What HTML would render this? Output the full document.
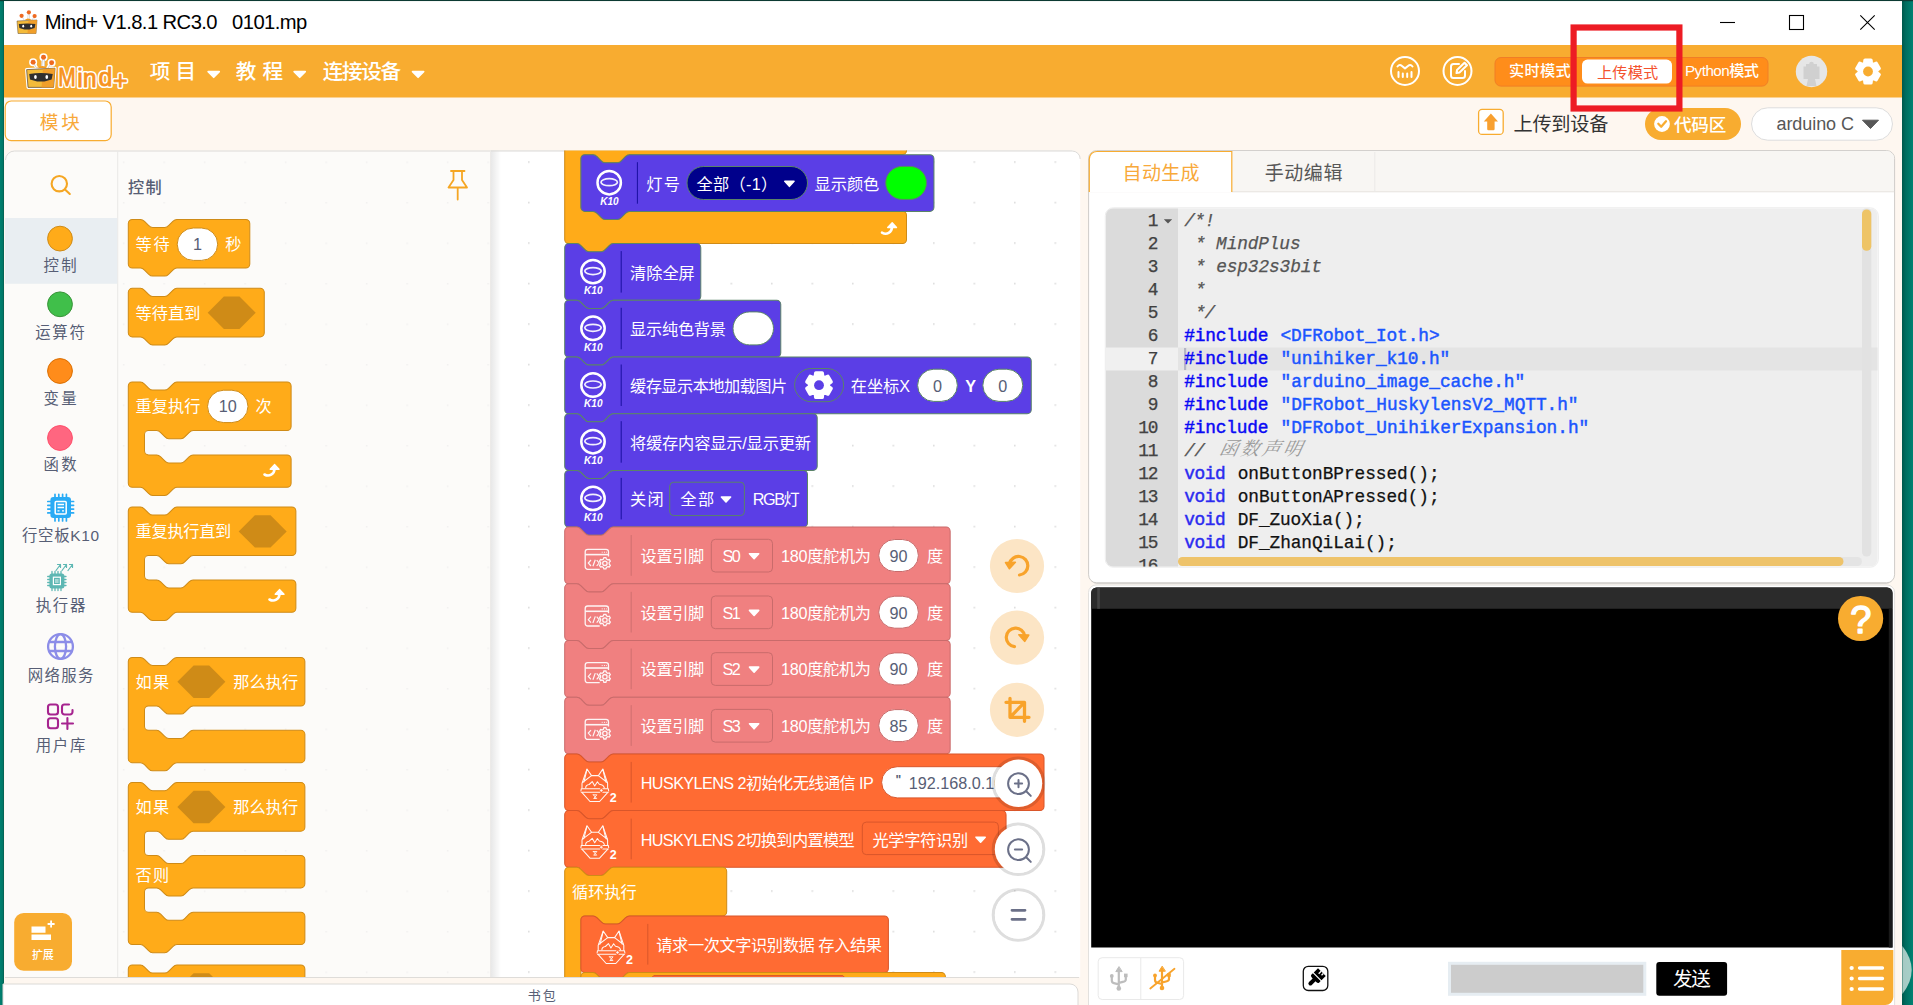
<!DOCTYPE html>
<html lang="zh-CN"><head><meta charset="utf-8"><title>Mind+ V1.8.1 RC3.0 0101.mp</title>
<style>html,body{margin:0;padding:0;background:#FEF7F0;}body{width:1913px;height:1005px;position:relative;overflow:hidden;font-family:'Liberation Sans','Noto Sans CJK SC',sans-serif}svg text{white-space:pre}</style></head>
<body>
<svg width="1913" height="1005" viewBox="0 0 1913 1005" font-family='"Liberation Sans","Noto Sans CJK SC",sans-serif' style="position:absolute;left:0;top:0">
<defs>
<linearGradient id="gR" x1="0" x2="1"><stop offset="0" stop-color="#00584c"/><stop offset="0.35" stop-color="#006e60"/><stop offset="1" stop-color="#008272"/></linearGradient>
<linearGradient id="gL" x1="0" x2="1"><stop offset="0" stop-color="#008070"/><stop offset="0.8" stop-color="#007565"/><stop offset="1" stop-color="#0a4a40"/></linearGradient>
<linearGradient id="shF" x1="0" x2="1"><stop offset="0" stop-color="#000" stop-opacity="0.09"/><stop offset="1" stop-color="#000" stop-opacity="0"/></linearGradient>
<clipPath id="cpWS"><path d="M491,150.5 H1072.2 a8,8 0 0 1 8,8 V977 H491 z"/></clipPath>
<clipPath id="cpFly"><rect x="118" y="151.5" width="373" height="825.5"/></clipPath>
<clipPath id="cpEd"><rect x="1106" y="208.5" width="771.5" height="358" rx="7"/></clipPath>
<pattern id="dots" x="528" y="161.25" width="40.5" height="40.5" patternUnits="userSpaceOnUse"><rect x="0" y="0" width="1.6" height="1.6" fill="#dcdcdc"/></pattern>
<pattern id="dotsF" x="122.9" y="161.5" width="40.5" height="40.5" patternUnits="userSpaceOnUse"><rect x="0" y="0" width="1.5" height="1.5" fill="#f1f0ef"/></pattern>
</defs>
<rect x="0" y="0" width="1913" height="1005" fill="#FEF7F0"/>
<rect x="0" y="0" width="4" height="1005" fill="url(#gL)"/>
<rect x="1902" y="0" width="11" height="1005" fill="url(#gR)"/>
<rect x="0" y="0" width="1913" height="1.2" fill="#0c3a33"/>
<rect x="4" y="1.2" width="1898" height="44" fill="#fff"/>
<g transform="translate(16,9.5) scale(1.0)">
<path d="M12.3,3 L11.6,10 M13.4,3 L13.6,10 M5.8,6.5 L8,10.5 M18.4,7 L16,10.5" stroke="#c9c9c9" stroke-width="0.6" fill="none"/>
<path d="M8.6,10.6 Q12.2,7.2 15.6,10.6 z" fill="#f39a1e"/>
<path d="M1,11.5 L21,10.5 L20,24 L2,24 z" fill="#f4bb3a" stroke="#5a4630" stroke-width="0.5" stroke-linejoin="round"/>
<path d="M12.5,11 L21,10.5 L20,24 L11.5,24 z" fill="#f09a28" opacity="0.85"/>
<path d="M2.8,14.6 Q11,13.2 19.4,14.6 L18.6,18.4 L13.5,19.9 H8.4 L3.4,18.4 z" fill="#2f2f2f"/>
<ellipse cx="7.2" cy="16.7" rx="0.95" ry="1.35" fill="#fff"/><ellipse cx="15.2" cy="16.7" rx="0.95" ry="1.35" fill="#fff"/>
<g fill="#ee6a21"><circle cx="5.6" cy="6.3" r="2.1"/><circle cx="12.9" cy="2.8" r="2.1"/><circle cx="18.6" cy="6.6" r="2.1"/></g>
</g>
<text x="44.80" y="29.40" font-size="20.2" fill="#000" textLength="262.50" lengthAdjust="spacing" xml:space="preserve">Mind+ V1.8.1 RC3.0   0101.mp</text>
<g stroke="#000" stroke-width="1.1" fill="none"><path d="M1720,22.5 H1735"/><rect x="1789.5" y="15.5" width="14" height="14"/><path d="M1860.3,15.3 L1874.7,29.7 M1874.7,15.3 L1860.3,29.7"/></g>
<rect x="4" y="45" width="1898" height="52.5" fill="#F8AC30"/>
<g transform="translate(25.2,53.3) scale(1.42)">
<g stroke="#fff" stroke-width="2.2" stroke-linejoin="round" fill="#fff"><path d="M1,11.5 L21,10.5 L20,24 L2,24 z"/><circle cx="5.6" cy="6.3" r="1.75"/><circle cx="12.9" cy="2.8" r="1.75"/><circle cx="18.6" cy="6.6" r="1.75"/><path d="M12.6,3 V10 M5.8,6.5 L8,10 M18,7 L16,10"/></g>
<path d="M12.3,3 L11.6,10 M13.4,3 L13.6,10 M5.8,6.5 L8,10.5 M18.4,7 L16,10.5" stroke="#c9c9c9" stroke-width="0.6" fill="none"/>
<path d="M8.6,10.6 Q12.2,7.2 15.6,10.6 z" fill="#f39a1e"/>
<path d="M1,11.5 L21,10.5 L20,24 L2,24 z" fill="#f4bb3a" stroke="#5a4630" stroke-width="0.5" stroke-linejoin="round"/>
<path d="M12.5,11 L21,10.5 L20,24 L11.5,24 z" fill="#f09a28" opacity="0.85"/>
<path d="M2.8,14.6 Q11,13.2 19.4,14.6 L18.6,18.4 L13.5,19.9 H8.4 L3.4,18.4 z" fill="#2f2f2f"/>
<ellipse cx="7.2" cy="16.7" rx="0.95" ry="1.35" fill="#fff"/><ellipse cx="15.2" cy="16.7" rx="0.95" ry="1.35" fill="#fff"/>
<g fill="#ee6a21"><circle cx="5.6" cy="6.3" r="1.75"/><circle cx="12.9" cy="2.8" r="1.75"/><circle cx="18.6" cy="6.6" r="1.75"/></g>
</g>
<text transform="translate(58.3,86.2) scale(0.84,1)" x="0" y="0" font-size="25" fill="#fff" stroke="#fff" stroke-width="3.9" stroke-linejoin="round">M</text>
<text transform="translate(77.3,86.8) scale(1,1)" x="0" y="0" font-size="25" fill="#fff" stroke="#fff" stroke-width="3.9" stroke-linejoin="round">i</text>
<text transform="translate(82.8,87.4) scale(1,1)" x="0" y="0" font-size="25" fill="#fff" stroke="#fff" stroke-width="3.9" stroke-linejoin="round">n</text>
<text transform="translate(98.6,86.4) scale(1,1)" x="0" y="0" font-size="25" fill="#fff" stroke="#fff" stroke-width="3.9" stroke-linejoin="round">d</text>
<text transform="translate(113.0,88.6) scale(1,1)" x="0" y="0" font-size="25" fill="#fff" stroke="#fff" stroke-width="3.9" stroke-linejoin="round">+</text>
<text transform="translate(58.3,86.2) scale(0.84,1)" x="0" y="0" font-size="25" fill="#F7931E" stroke="#F7931E" stroke-width="0.8" stroke-linejoin="round">M</text>
<text transform="translate(77.3,86.8) scale(1,1)" x="0" y="0" font-size="25" fill="#F7931E" stroke="#F7931E" stroke-width="0.8" stroke-linejoin="round">i</text>
<text transform="translate(82.8,87.4) scale(1,1)" x="0" y="0" font-size="25" fill="#F7931E" stroke="#F7931E" stroke-width="0.8" stroke-linejoin="round">n</text>
<text transform="translate(98.6,86.4) scale(1,1)" x="0" y="0" font-size="25" fill="#F7931E" stroke="#F7931E" stroke-width="0.8" stroke-linejoin="round">d</text>
<text transform="translate(113.0,88.6) scale(1,1)" x="0" y="0" font-size="25" fill="#F7931E" stroke="#F7931E" stroke-width="0.8" stroke-linejoin="round">+</text>
<text x="149.73" y="78.60" font-size="20.6" fill="#fff" font-weight="500" textLength="46.30" lengthAdjust="spacing">项 目</text>
<path d="M208.2,71.6 h11 l-5.5,5.6 z" fill="#fff" stroke="#fff" stroke-width="1.8" stroke-linejoin="round"/>
<text x="235.73" y="78.60" font-size="20.6" fill="#fff" font-weight="500" textLength="47.30" lengthAdjust="spacing">教 程</text>
<path d="M294.2,71.6 h11 l-5.5,5.6 z" fill="#fff" stroke="#fff" stroke-width="1.8" stroke-linejoin="round"/>
<text x="322.73" y="78.60" font-size="20.6" fill="#fff" font-weight="500" textLength="78.30" lengthAdjust="spacing">连接设备</text>
<path d="M412.6,71.6 h11 l-5.5,5.6 z" fill="#fff" stroke="#fff" stroke-width="1.8" stroke-linejoin="round"/>
<g fill="none" stroke="#fff" stroke-width="2"><circle cx="1405" cy="71" r="14"/><circle cx="1457.5" cy="71" r="14"/></g>
<g fill="none" stroke="#fff" stroke-width="2" stroke-linecap="round" stroke-linejoin="round"><path d="M1397.5,66.5 Q1399.5,64 1402,66 L1405,68.4 L1408,66 Q1410.5,64 1412.5,66.5"/><path d="M1398.5,72 V77 M1402.8,73.5 V77 M1407.2,73.5 V77 M1411.5,72 V77"/></g>
<g fill="none" stroke="#fff" stroke-width="2" stroke-linecap="round" stroke-linejoin="round"><path d="M1459,64 H1453.5 a2.5,2.5 0 0 0 -2.5,2.5 V75.500 a2.500,2.500 0 0 0 2.500,2.500 H1462.500 a2.500,2.500 0 0 0 2.500,-2.500 V71"/><path d="M1456.5,73 L1457,70 L1464.5,62.8 L1467,65.300 L1459.500,72.500 z"/></g>
<rect x="1495.00" y="57.50" width="273.00" height="28.60" rx="6" fill="#FF8D1A" stroke="#F07E26" stroke-width="1" />
<text x="1509.06" y="76.20" font-size="15.2" fill="#fff" font-weight="500" textLength="61.56" lengthAdjust="spacing">实时模式</text>
<rect x="1582.00" y="59.60" width="90.00" height="24.00" rx="5.5" fill="#fff" />
<text x="1597.06" y="78.20" font-size="15.2" fill="#F4522E" textLength="61.06" lengthAdjust="spacing">上传模式</text>
<text x="1685.00" y="75.50" font-size="15.2" fill="#fff" font-weight="500" textLength="74.00" lengthAdjust="spacing">Python模式</text>
<circle cx="1811.5" cy="71.5" r="15.7" fill="#e6e6e6"/>
<path d="M1803.5,66.5 h2.5 v-2.500 h3.200 a2.300,2.300 0 0 1 4.600,0 h3.200 v2.500 h2.500 v12.500 h-4.500 l1.500,7 h-10 l1.500,-7 h-4.500 z" fill="#d0d0d0"/>
<path d="M 1864.68,63.35 L 1865.00,60.30 L 1871.00,60.30 L 1871.32,63.35 L 1873.39,64.55 L 1876.20,63.30 L 1879.20,68.50 L 1876.72,70.31 L 1876.72,72.69 L 1879.20,74.50 L 1876.20,79.70 L 1873.39,78.45 L 1871.32,79.65 L 1871.00,82.70 L 1865.00,82.70 L 1864.68,79.65 L 1862.61,78.45 L 1859.80,79.70 L 1856.80,74.50 L 1859.28,72.69 L 1859.28,70.31 L 1856.80,68.50 L 1859.80,63.30 L 1862.61,64.55 z" fill="#fff" stroke="#fff" stroke-width="3.4" stroke-linejoin="round"/>
<circle cx="1868" cy="71.5" r="4.9" fill="#F8AC30"/>
<rect x="5.20" y="101.00" width="106.00" height="39.60" rx="6" fill="#fff" stroke="#F8AC30" stroke-width="1.2" />
<text x="39.85" y="129.20" font-size="18.6" fill="#F8A93A" textLength="40.03" lengthAdjust="spacing">模块</text>
<rect x="1478.60" y="109.40" width="24.60" height="25.00" rx="3.5" fill="#fff" stroke="#F8AC30" stroke-width="1.3" />
<path d="M1490.9,113.6 L1498,121.6 H1494.600 V129 a1.200,1.200 0 0 1 -1.200,1.200 H1488.400 a1.200,1.200 0 0 1 -1.200,-1.200 V121.600 H1483.800 z" fill="#F8A030"/>
<text x="1513.41" y="131.30" font-size="19.2" fill="#333" textLength="95.11" lengthAdjust="spacing">上传到设备</text>
<rect x="1645.00" y="108.00" width="96.00" height="32.00" rx="16.00" fill="#F8AC30"/>
<circle cx="1662" cy="124" r="7.9" fill="#fff"/><path d="M1658.300,123.800 L1661.200,126.700 L1666,121.300" fill="none" stroke="#F8AC30" stroke-width="2.300" stroke-linecap="round" stroke-linejoin="round"/>
<text x="1673.91" y="130.60" font-size="17.6" fill="#fff" font-weight="500" textLength="52.39" lengthAdjust="spacing">代码区</text>
<rect x="1751.50" y="107.80" width="141.00" height="32.40" rx="16.20" fill="#fff" stroke="#ddd" stroke-width="1"/>
<text x="1776.50" y="129.60" font-size="18" fill="#575757" textLength="77.50" lengthAdjust="spacing">arduino C</text>
<path d="M1862.5,120.200 h16 l-8,8.300 z" fill="#575757" stroke="#575757" stroke-width="1" stroke-linejoin="round"/>
<path d="M5,977 V158.500 a8,8 0 0 1 8,-8 H491 V977 z" fill="#FCFBF9"/>
<path d="M5.5,160 a9,9 0 0 1 9,-9 H1072" fill="none" stroke="#dcdad7" stroke-width="1"/>
<g clip-path="url(#cpWS)"><rect x="491" y="150" width="590" height="830" fill="#fff"/><rect x="491" y="150" width="590" height="830" fill="url(#dots)"/><rect x="491" y="150" width="10" height="830" fill="url(#shF)"/></g>
<path d="M491,151 H1072.200 a8,8 0 0 1 8,8" fill="none" stroke="#dcdad7" stroke-width="1"/>
<rect x="117.200" y="151.500" width="1" height="825.500" fill="#e9e8e6"/>
<rect x="490" y="151.500" width="1.200" height="825.500" fill="#eceae8"/>
<rect x="5" y="218" width="112.200" height="65.800" fill="#E9EEF2"/>
<g fill="none" stroke="#F5A623" stroke-width="2.100" stroke-linecap="round"><circle cx="59.300" cy="183.700" r="7.700"/><path d="M65,189.600 L69.800,194"/></g>
<circle cx="60" cy="238.6" r="12.400" fill="#FFAB19" stroke="#CF8B17" stroke-width="1"/>
<text x="60.00" y="271.00" font-size="15.4" fill="#575E75" text-anchor="middle" textLength="33.09" lengthAdjust="spacing">控制</text>
<circle cx="60" cy="304.3" r="12.400" fill="#40BF4A" stroke="#389438" stroke-width="1"/>
<text x="60.00" y="338.30" font-size="15.4" fill="#575E75" text-anchor="middle" textLength="49.59" lengthAdjust="spacing">运算符</text>
<circle cx="60" cy="371" r="12.400" fill="#FF8C1A" stroke="#DB6E00" stroke-width="1"/>
<text x="60.00" y="403.90" font-size="15.4" fill="#575E75" text-anchor="middle" textLength="33.09" lengthAdjust="spacing">变量</text>
<circle cx="60" cy="438" r="12.400" fill="#FF6680" stroke="#FF4D6A" stroke-width="1"/>
<text x="60.00" y="470.40" font-size="15.4" fill="#575E75" text-anchor="middle" textLength="33.09" lengthAdjust="spacing">函数</text>
<g transform="translate(47,493.500)"><g stroke="#29ABF5" stroke-width="1.700" stroke-linecap="round"><path d="M8,0.800 V4 M11.800,0.800 V4 M15.600,0.800 V4 M19.400,0.800 V4 M8,24 V27.400 M11.800,24 V27.400 M15.600,24 V27.400 M19.400,24 V27.400 M0.800,8 H4 M0.800,11.800 H4 M0.800,15.600 H4 M0.800,19.400 H4 M23.400,8 H26.600 M23.400,11.800 H26.600 M23.400,15.600 H26.600 M23.400,19.400 H26.600"/></g><rect x="3.400" y="3.600" width="20.600" height="21" rx="3" fill="#29ABF5"/><rect x="8.200" y="8" width="11" height="12.500" rx="1" fill="none" stroke="#fff" stroke-width="1.500"/><path d="M10.500,11 h6.500 M10.500,14 h6.500 M10.500,17.300 h2 M15,17.300 h2" stroke="#fff" stroke-width="1.300"/></g>
<text x="60.50" y="540.80" font-size="15.4" fill="#575E75" text-anchor="middle" textLength="77.09" lengthAdjust="spacing">行空板K10</text>
<g transform="translate(47,563)"><g stroke="#5DB7B3" stroke-width="1.300" stroke-linecap="round"><path d="M5,8.500 V11 M8,8.500 V11 M11,8.500 V11 M14,8.500 V11 M5,25 V27.500 M8,25 V27.500 M11,25 V27.500 M14,25 V27.500 M0.700,13.500 H3 M0.700,16.500 H3 M0.700,19.500 H3 M0.700,22.500 H3 M16.600,13.500 H19 M16.600,16.500 H19 M16.600,19.500 H19 M16.600,22.500 H19"/></g><rect x="2.400" y="10.400" width="15" height="15.200" rx="2.500" fill="#5DB7B3"/><rect x="6.400" y="14.200" width="7" height="7.400" fill="none" stroke="#fff" stroke-width="1.200"/><path d="M8,17 h3.600 M8,19 h3.600" stroke="#fff" stroke-width="0.900"/><g fill="none" stroke="#5DB7B3" stroke-width="1.200" stroke-linecap="round" stroke-linejoin="round"><path d="M9,7.500 L13.500,1.500 M10.500,1.500 H13.500 V4.500 M15,7.500 L19.500,1.500 M16.500,1.500 H19.500 V4.500 M21,7.500 L25.500,1.500 M22.500,1.500 H25.500 V4.500"/></g></g>
<text x="60.50" y="610.80" font-size="15.4" fill="#575E75" text-anchor="middle" textLength="49.59" lengthAdjust="spacing">执行器</text>
<g fill="none" stroke="#8C8DE8" stroke-width="2.300"><circle cx="60.500" cy="646.500" r="12.400"/><ellipse cx="60.500" cy="646.500" rx="5.600" ry="12.400"/><path d="M48.500,642 H72.500 M48.500,651 H72.500"/></g>
<text x="60.50" y="680.80" font-size="15.4" fill="#575E75" text-anchor="middle" textLength="65.59" lengthAdjust="spacing">网络服务</text>
<g fill="none" stroke="#A6248F" stroke-width="2.100" stroke-linejoin="round" stroke-linecap="round"><rect x="48" y="704.500" width="10" height="10" rx="2.500"/><rect x="48" y="718.300" width="10" height="10" rx="2.500"/><path d="M72.500,710 V712 a2.500,2.500 0 0 1 -2.500,2.500 H64.500 a2.500,2.500 0 0 1 -2.500,-2.500 V707 a2.500,2.500 0 0 1 2.500,-2.500 H69"/><path d="M67.400,718 V729 M62,723.500 H73"/></g>
<text x="60.50" y="750.70" font-size="15.4" fill="#575E75" text-anchor="middle" textLength="49.59" lengthAdjust="spacing">用户库</text>
<rect x="14.20" y="913.00" width="57.80" height="57.80" rx="9.5" fill="#F8AC30" />
<g fill="#fff"><path d="M31.500,926.500 h14 v6.200 h-14 z M31.500,934.500 h19.500 v5.600 h-19.500 z"/><path d="M50.200,920.500 h1.800 v2.600 h2.600 v1.800 h-2.600 v2.600 h-1.800 v-2.600 h-2.600 v-1.800 h2.600 z"/></g>
<text x="42.80" y="958.90" font-size="11.0" fill="#fff" font-weight="500" text-anchor="middle" textLength="21.79" lengthAdjust="spacing">扩展</text>
<g clip-path="url(#cpFly)">
<rect x="118" y="151" width="373" height="830" fill="url(#dotsF)"/>
<text x="128.00" y="193.00" font-size="16.2" fill="#575E75" font-weight="500" textLength="33.70" lengthAdjust="spacing">控制</text>
<g fill="none" stroke="#F5A623" stroke-width="1.800" stroke-linejoin="round" stroke-linecap="round"><path d="M451,171 H464.500 M453.500,171 V180 L448.500,187.500 H467 L462,180 V171 M457.700,187.500 V199.500"/></g>
<path transform="translate(128.30,219.40) scale(1.0125)" d="M 0,4 A 4,4 0 0,1 4,0 H 12 c 2,0 3,1 4,2 l 4,4 c 1,1 2,2 4,2 h 12 c 2,0 3,-1 4,-2 l 4,-4 c 1,-1 2,-2 4,-2 H 116 a 4,4 0 0,1 4,4 V 44 a 4,4 0 0,1 -4,4 H 48 c -2,0 -3,1 -4,2 l -4,4 c -1,1 -2,2 -4,2 h -12 c -2,0 -3,-1 -4,-2 l -4,-4 c -1,-1 -2,-2 -4,-2 H 4 a 4,4 0 0,1 -4,-4 z" fill="#FFAB19" stroke="#CF8B17" stroke-width="1"/>
<text x="135.60" y="249.70" font-size="16.2" fill="#fff" textLength="34.00" lengthAdjust="spacing">等待</text>
<rect x="177.20" y="228.00" width="40.50" height="32.40" rx="16.20" fill="#fff" stroke="#CF8B17" stroke-width="1"/>
<text x="197.40" y="249.50" font-size="16.2" fill="#575E75" text-anchor="middle">1</text>
<text x="225.30" y="249.70" font-size="16.2" fill="#fff">秒</text>
<path transform="translate(128.30,288.30) scale(1.0125)" d="M 0,4 A 4,4 0 0,1 4,0 H 12 c 2,0 3,1 4,2 l 4,4 c 1,1 2,2 4,2 h 12 c 2,0 3,-1 4,-2 l 4,-4 c 1,-1 2,-2 4,-2 H 130.3 a 4,4 0 0,1 4,4 V 44 a 4,4 0 0,1 -4,4 H 48 c -2,0 -3,1 -4,2 l -4,4 c -1,1 -2,2 -4,2 h -12 c -2,0 -3,-1 -4,-2 l -4,-4 c -1,-1 -2,-2 -4,-2 H 4 a 4,4 0 0,1 -4,-4 z" fill="#FFAB19" stroke="#CF8B17" stroke-width="1"/>
<text x="135.60" y="318.60" font-size="16.2" fill="#fff" textLength="64.80" lengthAdjust="spacing">等待直到</text>
<path d="M 223.90,296.50 H 239.50 L 255.70,312.70 L 239.50,328.90 H 223.90 L 207.70,312.70 z" fill="#CF8B17"/>
<path transform="translate(128.30,382.00) scale(1.0125)" d="M 0,4 A 4,4 0 0,1 4,0 H 12 c 2,0 3,1 4,2 l 4,4 c 1,1 2,2 4,2 h 12 c 2,0 3,-1 4,-2 l 4,-4 c 1,-1 2,-2 4,-2 H 156.8 a 4,4 0 0,1 4,4 V 44 a 4,4 0 0,1 -4,4 H 64 c -2,0 -3,1 -4,2 l -4,4 c -1,1 -2,2 -4,2 h -12 c -2,0 -3,-1 -4,-2 l -4,-4 c -1,-1 -2,-2 -4,-2 H 20 a 4,4 0 0,0 -4,4 V 68 a 4,4 0 0,0 4,4 H 28 c 2,0 3,1 4,2 l 4,4 c 1,1 2,2 4,2 h 12 c 2,0 3,-1 4,-2 l 4,-4 c 1,-1 2,-2 4,-2 H 156.8 a 4,4 0 0,1 4,4 V 100 a 4,4 0 0,1 -4,4 H 48 c -2,0 -3,1 -4,2 l -4,4 c -1,1 -2,2 -4,2 h -12 c -2,0 -3,-1 -4,-2 l -4,-4 c -1,-1 -2,-2 -4,-2 H 4 a 4,4 0 0,1 -4,-4 z" fill="#FFAB19" stroke="#CF8B17" stroke-width="1"/>
<text x="135.60" y="412.30" font-size="16.2" fill="#fff" textLength="64.80" lengthAdjust="spacing">重复执行</text>
<rect x="207.50" y="390.20" width="40.50" height="32.40" rx="16.20" fill="#fff" stroke="#CF8B17" stroke-width="1"/>
<text x="227.80" y="412.10" font-size="16.2" fill="#575E75" text-anchor="middle">10</text>
<text x="255.50" y="412.30" font-size="16.2" fill="#fff">次</text>
<g transform="translate(263.00,463.00)" fill="none" stroke="#fff" stroke-width="2.6" stroke-linecap="round" stroke-linejoin="round"><path d="M1.5,11.5 C6,14 11.5,11.5 11.5,5.5"/><path d="M7.2,6.3 L11.7,1.6 L16,6.3 z" fill="#fff" stroke-width="1.4"/></g>
<path transform="translate(128.30,507.00) scale(1.0125)" d="M 0,4 A 4,4 0 0,1 4,0 H 12 c 2,0 3,1 4,2 l 4,4 c 1,1 2,2 4,2 h 12 c 2,0 3,-1 4,-2 l 4,-4 c 1,-1 2,-2 4,-2 H 161.5 a 4,4 0 0,1 4,4 V 44 a 4,4 0 0,1 -4,4 H 64 c -2,0 -3,1 -4,2 l -4,4 c -1,1 -2,2 -4,2 h -12 c -2,0 -3,-1 -4,-2 l -4,-4 c -1,-1 -2,-2 -4,-2 H 20 a 4,4 0 0,0 -4,4 V 68 a 4,4 0 0,0 4,4 H 28 c 2,0 3,1 4,2 l 4,4 c 1,1 2,2 4,2 h 12 c 2,0 3,-1 4,-2 l 4,-4 c 1,-1 2,-2 4,-2 H 161.5 a 4,4 0 0,1 4,4 V 100 a 4,4 0 0,1 -4,4 H 48 c -2,0 -3,1 -4,2 l -4,4 c -1,1 -2,2 -4,2 h -12 c -2,0 -3,-1 -4,-2 l -4,-4 c -1,-1 -2,-2 -4,-2 H 4 a 4,4 0 0,1 -4,-4 z" fill="#FFAB19" stroke="#CF8B17" stroke-width="1"/>
<text x="135.60" y="537.30" font-size="16.2" fill="#fff" textLength="95.70" lengthAdjust="spacing">重复执行直到</text>
<path d="M 254.90,515.20 H 270.50 L 286.70,531.40 L 270.50,547.60 H 254.90 L 238.70,531.40 z" fill="#CF8B17"/>
<g transform="translate(268.00,588.00)" fill="none" stroke="#fff" stroke-width="2.6" stroke-linecap="round" stroke-linejoin="round"><path d="M1.5,11.5 C6,14 11.5,11.5 11.5,5.5"/><path d="M7.2,6.3 L11.7,1.6 L16,6.3 z" fill="#fff" stroke-width="1.4"/></g>
<path transform="translate(128.30,657.40) scale(1.0125)" d="M 0,4 A 4,4 0 0,1 4,0 H 12 c 2,0 3,1 4,2 l 4,4 c 1,1 2,2 4,2 h 12 c 2,0 3,-1 4,-2 l 4,-4 c 1,-1 2,-2 4,-2 H 170.4 a 4,4 0 0,1 4,4 V 44 a 4,4 0 0,1 -4,4 H 64 c -2,0 -3,1 -4,2 l -4,4 c -1,1 -2,2 -4,2 h -12 c -2,0 -3,-1 -4,-2 l -4,-4 c -1,-1 -2,-2 -4,-2 H 20 a 4,4 0 0,0 -4,4 V 68 a 4,4 0 0,0 4,4 H 28 c 2,0 3,1 4,2 l 4,4 c 1,1 2,2 4,2 h 12 c 2,0 3,-1 4,-2 l 4,-4 c 1,-1 2,-2 4,-2 H 170.4 a 4,4 0 0,1 4,4 V 100 a 4,4 0 0,1 -4,4 H 48 c -2,0 -3,1 -4,2 l -4,4 c -1,1 -2,2 -4,2 h -12 c -2,0 -3,-1 -4,-2 l -4,-4 c -1,-1 -2,-2 -4,-2 H 4 a 4,4 0 0,1 -4,-4 z" fill="#FFAB19" stroke="#CF8B17" stroke-width="1"/>
<text x="135.60" y="687.70" font-size="16.2" fill="#fff" textLength="33.70" lengthAdjust="spacing">如果</text>
<path d="M 193.60,665.60 H 209.20 L 225.40,681.80 L 209.20,698.00 H 193.60 L 177.40,681.80 z" fill="#CF8B17"/>
<text x="233.30" y="687.70" font-size="16.2" fill="#fff" textLength="64.80" lengthAdjust="spacing">那么执行</text>
<path transform="translate(128.30,782.60) scale(1.0125)" d="M 0,4 A 4,4 0 0,1 4,0 H 12 c 2,0 3,1 4,2 l 4,4 c 1,1 2,2 4,2 h 12 c 2,0 3,-1 4,-2 l 4,-4 c 1,-1 2,-2 4,-2 H 170.4 a 4,4 0 0,1 4,4 V 44 a 4,4 0 0,1 -4,4 H 64 c -2,0 -3,1 -4,2 l -4,4 c -1,1 -2,2 -4,2 h -12 c -2,0 -3,-1 -4,-2 l -4,-4 c -1,-1 -2,-2 -4,-2 H 20 a 4,4 0 0,0 -4,4 V 68 a 4,4 0 0,0 4,4 H 28 c 2,0 3,1 4,2 l 4,4 c 1,1 2,2 4,2 h 12 c 2,0 3,-1 4,-2 l 4,-4 c 1,-1 2,-2 4,-2 H 170.4 a 4,4 0 0,1 4,4 V 100 a 4,4 0 0,1 -4,4 H 64 c -2,0 -3,1 -4,2 l -4,4 c -1,1 -2,2 -4,2 h -12 c -2,0 -3,-1 -4,-2 l -4,-4 c -1,-1 -2,-2 -4,-2 H 20 a 4,4 0 0,0 -4,4 V 124 a 4,4 0 0,0 4,4 H 28 c 2,0 3,1 4,2 l 4,4 c 1,1 2,2 4,2 h 12 c 2,0 3,-1 4,-2 l 4,-4 c 1,-1 2,-2 4,-2 H 170.4 a 4,4 0 0,1 4,4 V 156 a 4,4 0 0,1 -4,4 H 48 c -2,0 -3,1 -4,2 l -4,4 c -1,1 -2,2 -4,2 h -12 c -2,0 -3,-1 -4,-2 l -4,-4 c -1,-1 -2,-2 -4,-2 H 4 a 4,4 0 0,1 -4,-4 z" fill="#FFAB19" stroke="#CF8B17" stroke-width="1"/>
<text x="135.60" y="812.90" font-size="16.2" fill="#fff" textLength="33.70" lengthAdjust="spacing">如果</text>
<path d="M 193.60,790.80 H 209.20 L 225.40,807.00 L 209.20,823.20 H 193.60 L 177.40,807.00 z" fill="#CF8B17"/>
<text x="233.30" y="812.90" font-size="16.2" fill="#fff" textLength="64.80" lengthAdjust="spacing">那么执行</text>
<text x="135.60" y="881.00" font-size="16.2" fill="#fff" textLength="33.70" lengthAdjust="spacing">否则</text>
<path transform="translate(128.30,965.00) scale(1.0125)" d="M 0,4 A 4,4 0 0,1 4,0 H 12 c 2,0 3,1 4,2 l 4,4 c 1,1 2,2 4,2 h 12 c 2,0 3,-1 4,-2 l 4,-4 c 1,-1 2,-2 4,-2 H 170.4 a 4,4 0 0,1 4,4 V 44 a 4,4 0 0,1 -4,4 H 48 c -2,0 -3,1 -4,2 l -4,4 c -1,1 -2,2 -4,2 h -12 c -2,0 -3,-1 -4,-2 l -4,-4 c -1,-1 -2,-2 -4,-2 H 4 a 4,4 0 0,1 -4,-4 z" fill="#FFAB19" stroke="#CF8B17" stroke-width="1"/>
<path d="M 193.60,973.20 H 209.20 L 225.40,989.40 L 209.20,1005.60 H 193.60 L 177.40,989.40 z" fill="#CF8B17"/>
</g>
<g clip-path="url(#cpWS)">
<path transform="translate(564.70,105.90) scale(1.0125)" d="M 0,4 A 4,4 0 0,1 4,0 H 12 c 2,0 3,1 4,2 l 4,4 c 1,1 2,2 4,2 h 12 c 2,0 3,-1 4,-2 l 4,-4 c 1,-1 2,-2 4,-2 H 333.6 a 4,4 0 0,1 4,4 V 44 a 4,4 0 0,1 -4,4 H 64 c -2,0 -3,1 -4,2 l -4,4 c -1,1 -2,2 -4,2 h -12 c -2,0 -3,-1 -4,-2 l -4,-4 c -1,-1 -2,-2 -4,-2 H 20 a 4,4 0 0,0 -4,4 V 100 a 4,4 0 0,0 4,4 H 28 c 2,0 3,1 4,2 l 4,4 c 1,1 2,2 4,2 h 12 c 2,0 3,-1 4,-2 l 4,-4 c 1,-1 2,-2 4,-2 H 333.6 a 4,4 0 0,1 4,4 V 132 a 4,4 0 0,1 -4,4 H 48 c -2,0 -3,1 -4,2 l -4,4 c -1,1 -2,2 -4,2 h -12 c -2,0 -3,-1 -4,-2 l -4,-4 c -1,-1 -2,-2 -4,-2 H 4 a 4,4 0 0,1 -4,-4 z" fill="#FFAB19" stroke="#CF8B17" stroke-width="1"/>
<g transform="translate(880.50,221.20)" fill="none" stroke="#fff" stroke-width="2.6" stroke-linecap="round" stroke-linejoin="round"><path d="M1.5,11.5 C6,14 11.5,11.5 11.5,5.5"/><path d="M7.2,6.3 L11.7,1.6 L16,6.3 z" fill="#fff" stroke-width="1.4"/></g>
<path transform="translate(580.90,154.70) scale(1.0125)" d="M 0,4 A 4,4 0 0,1 4,0 H 12 c 2,0 3,1 4,2 l 4,4 c 1,1 2,2 4,2 h 12 c 2,0 3,-1 4,-2 l 4,-4 c 1,-1 2,-2 4,-2 H 344.7 a 4,4 0 0,1 4,4 V 52 a 4,4 0 0,1 -4,4 H 48 c -2,0 -3,1 -4,2 l -4,4 c -1,1 -2,2 -4,2 h -12 c -2,0 -3,-1 -4,-2 l -4,-4 c -1,-1 -2,-2 -4,-2 H 4 a 4,4 0 0,1 -4,-4 z" fill="#5B3EE6" stroke="#5a8467" stroke-width="1"/>
<circle cx="609.20" cy="182.70" r="11.7" fill="none" stroke="#fff" stroke-width="2.5"/>
<ellipse cx="609.20" cy="182.20" rx="8.2" ry="3.5" fill="none" stroke="#fff" stroke-width="1.7" opacity="0.92"/>
<text x="609.50" y="204.90" font-size="10" fill="#fff" font-weight="700" text-anchor="middle" font-style="italic">K10</text>
<line x1="637.40" y1="162.20" x2="637.40" y2="203.70" stroke="#1a0fa0" stroke-width="1"/>
<text x="646.30" y="189.60" font-size="16.2" fill="#fff" textLength="33.70" lengthAdjust="spacing">灯号</text>
<rect x="687.00" y="166.50" width="120.50" height="33.00" rx="16.50" fill="#00008B" stroke="#5a8467" stroke-width="1"/>
<text x="696.50" y="189.60" font-size="16.2" fill="#fff" textLength="80.70" lengthAdjust="spacing">全部（-1）</text>
<path d="M 784.80,181.30 h 9.2 l -4.60,5.0 z" fill="#fff" stroke="#fff" stroke-width="1.6" stroke-linejoin="round"/>
<text x="814.50" y="189.60" font-size="16.2" fill="#fff" textLength="64.80" lengthAdjust="spacing">显示颜色</text>
<rect x="885.70" y="166.40" width="40.80" height="33.00" rx="16.50" fill="#00FF00" stroke="#5a8467" stroke-width="1"/>
<path transform="translate(564.70,243.60) scale(1.0125)" d="M 0,4 A 4,4 0 0,1 4,0 H 12 c 2,0 3,1 4,2 l 4,4 c 1,1 2,2 4,2 h 12 c 2,0 3,-1 4,-2 l 4,-4 c 1,-1 2,-2 4,-2 H 130.4 a 4,4 0 0,1 4,4 V 52 a 4,4 0 0,1 -4,4 H 48 c -2,0 -3,1 -4,2 l -4,4 c -1,1 -2,2 -4,2 h -12 c -2,0 -3,-1 -4,-2 l -4,-4 c -1,-1 -2,-2 -4,-2 H 4 a 4,4 0 0,1 -4,-4 z" fill="#5B3EE6" stroke="#5a8467" stroke-width="1"/>
<circle cx="593.00" cy="271.60" r="11.7" fill="none" stroke="#fff" stroke-width="2.5"/>
<ellipse cx="593.00" cy="271.10" rx="8.2" ry="3.5" fill="none" stroke="#fff" stroke-width="1.7" opacity="0.92"/>
<text x="593.30" y="293.80" font-size="10" fill="#fff" font-weight="700" text-anchor="middle" font-style="italic">K10</text>
<line x1="621.20" y1="251.10" x2="621.20" y2="292.60" stroke="#1a0fa0" stroke-width="1"/>
<text x="630.00" y="278.50" font-size="16.2" fill="#fff" textLength="64.80" lengthAdjust="spacing">清除全屏</text>
<path transform="translate(564.70,300.30) scale(1.0125)" d="M 0,4 A 4,4 0 0,1 4,0 H 12 c 2,0 3,1 4,2 l 4,4 c 1,1 2,2 4,2 h 12 c 2,0 3,-1 4,-2 l 4,-4 c 1,-1 2,-2 4,-2 H 209.4 a 4,4 0 0,1 4,4 V 52 a 4,4 0 0,1 -4,4 H 48 c -2,0 -3,1 -4,2 l -4,4 c -1,1 -2,2 -4,2 h -12 c -2,0 -3,-1 -4,-2 l -4,-4 c -1,-1 -2,-2 -4,-2 H 4 a 4,4 0 0,1 -4,-4 z" fill="#5B3EE6" stroke="#5a8467" stroke-width="1"/>
<circle cx="593.00" cy="328.30" r="11.7" fill="none" stroke="#fff" stroke-width="2.5"/>
<ellipse cx="593.00" cy="327.80" rx="8.2" ry="3.5" fill="none" stroke="#fff" stroke-width="1.7" opacity="0.92"/>
<text x="593.30" y="350.50" font-size="10" fill="#fff" font-weight="700" text-anchor="middle" font-style="italic">K10</text>
<line x1="621.20" y1="307.80" x2="621.20" y2="349.30" stroke="#1a0fa0" stroke-width="1"/>
<text x="630.00" y="335.20" font-size="16.2" fill="#fff" textLength="96.00" lengthAdjust="spacing">显示纯色背景</text>
<rect x="733.00" y="311.90" width="40.50" height="33.00" rx="16.50" fill="#fff" stroke="#5a8467" stroke-width="1"/>
<path transform="translate(564.70,357.00) scale(1.0125)" d="M 0,4 A 4,4 0 0,1 4,0 H 12 c 2,0 3,1 4,2 l 4,4 c 1,1 2,2 4,2 h 12 c 2,0 3,-1 4,-2 l 4,-4 c 1,-1 2,-2 4,-2 H 456.8 a 4,4 0 0,1 4,4 V 52 a 4,4 0 0,1 -4,4 H 48 c -2,0 -3,1 -4,2 l -4,4 c -1,1 -2,2 -4,2 h -12 c -2,0 -3,-1 -4,-2 l -4,-4 c -1,-1 -2,-2 -4,-2 H 4 a 4,4 0 0,1 -4,-4 z" fill="#5B3EE6" stroke="#5a8467" stroke-width="1"/>
<circle cx="593.00" cy="385.00" r="11.7" fill="none" stroke="#fff" stroke-width="2.5"/>
<ellipse cx="593.00" cy="384.50" rx="8.2" ry="3.5" fill="none" stroke="#fff" stroke-width="1.7" opacity="0.92"/>
<text x="593.30" y="407.20" font-size="10" fill="#fff" font-weight="700" text-anchor="middle" font-style="italic">K10</text>
<line x1="621.20" y1="364.50" x2="621.20" y2="406.00" stroke="#1a0fa0" stroke-width="1"/>
<text x="630.00" y="391.90" font-size="16.2" fill="#fff" textLength="157.20" lengthAdjust="spacing">缓存显示本地加载图片</text>
<rect x="794.60" y="368.50" width="49.00" height="33.20" rx="16.60" fill="#5B3EE6" stroke="#5a8467" stroke-width="1"/>
<path d="M 815.37,376.31 L 815.74,373.03 L 822.26,373.03 L 822.63,376.31 L 824.88,377.61 L 827.91,376.29 L 831.17,381.94 L 828.51,383.90 L 828.51,386.50 L 831.17,388.46 L 827.91,394.11 L 824.88,392.79 L 822.63,394.09 L 822.26,397.37 L 815.74,397.37 L 815.37,394.09 L 813.12,392.79 L 810.09,394.11 L 806.83,388.46 L 809.49,386.50 L 809.49,383.90 L 806.83,381.94 L 810.09,376.29 L 813.12,377.61 z" fill="#fff" stroke="#fff" stroke-width="3.400" stroke-linejoin="round"/>
<circle cx="819" cy="385.20" r="4.9" fill="#5B3EE6"/>
<text x="850.80" y="391.90" font-size="16.2" fill="#fff" textLength="59.20" lengthAdjust="spacing">在坐标X</text>
<rect x="917.60" y="369.20" width="39.80" height="32.20" rx="16.10" fill="#fff" stroke="#5a8467" stroke-width="1"/>
<text x="937.50" y="391.90" font-size="16.2" fill="#575E75" text-anchor="middle">0</text>
<text x="965.30" y="391.90" font-size="16.2" fill="#fff" font-weight="700">Y</text>
<rect x="982.80" y="369.20" width="40.00" height="32.20" rx="16.10" fill="#fff" stroke="#5a8467" stroke-width="1"/>
<text x="1002.80" y="391.90" font-size="16.2" fill="#575E75" text-anchor="middle">0</text>
<path transform="translate(564.70,413.70) scale(1.0125)" d="M 0,4 A 4,4 0 0,1 4,0 H 12 c 2,0 3,1 4,2 l 4,4 c 1,1 2,2 4,2 h 12 c 2,0 3,-1 4,-2 l 4,-4 c 1,-1 2,-2 4,-2 H 245.4 a 4,4 0 0,1 4,4 V 52 a 4,4 0 0,1 -4,4 H 48 c -2,0 -3,1 -4,2 l -4,4 c -1,1 -2,2 -4,2 h -12 c -2,0 -3,-1 -4,-2 l -4,-4 c -1,-1 -2,-2 -4,-2 H 4 a 4,4 0 0,1 -4,-4 z" fill="#5B3EE6" stroke="#5a8467" stroke-width="1"/>
<circle cx="593.00" cy="441.70" r="11.7" fill="none" stroke="#fff" stroke-width="2.5"/>
<ellipse cx="593.00" cy="441.20" rx="8.2" ry="3.5" fill="none" stroke="#fff" stroke-width="1.7" opacity="0.92"/>
<text x="593.30" y="463.90" font-size="10" fill="#fff" font-weight="700" text-anchor="middle" font-style="italic">K10</text>
<line x1="621.20" y1="421.20" x2="621.20" y2="462.70" stroke="#1a0fa0" stroke-width="1"/>
<text x="630.00" y="448.60" font-size="16.2" fill="#fff" textLength="180.90" lengthAdjust="spacing">将缓存内容显示/显示更新</text>
<path transform="translate(564.70,470.40) scale(1.0125)" d="M 0,4 A 4,4 0 0,1 4,0 H 12 c 2,0 3,1 4,2 l 4,4 c 1,1 2,2 4,2 h 12 c 2,0 3,-1 4,-2 l 4,-4 c 1,-1 2,-2 4,-2 H 235.8 a 4,4 0 0,1 4,4 V 52 a 4,4 0 0,1 -4,4 H 48 c -2,0 -3,1 -4,2 l -4,4 c -1,1 -2,2 -4,2 h -12 c -2,0 -3,-1 -4,-2 l -4,-4 c -1,-1 -2,-2 -4,-2 H 4 a 4,4 0 0,1 -4,-4 z" fill="#5B3EE6" stroke="#5a8467" stroke-width="1"/>
<circle cx="593.00" cy="498.40" r="11.7" fill="none" stroke="#fff" stroke-width="2.5"/>
<ellipse cx="593.00" cy="497.90" rx="8.2" ry="3.5" fill="none" stroke="#fff" stroke-width="1.7" opacity="0.92"/>
<text x="593.30" y="520.60" font-size="10" fill="#fff" font-weight="700" text-anchor="middle" font-style="italic">K10</text>
<line x1="621.20" y1="477.90" x2="621.20" y2="519.40" stroke="#1a0fa0" stroke-width="1"/>
<text x="630.00" y="505.30" font-size="16.2" fill="#fff" textLength="33.70" lengthAdjust="spacing">关闭</text>
<rect x="669.70" y="482.20" width="74.70" height="33.40" rx="4" fill="#5B3EE6" stroke="#5a8467" stroke-width="1" />
<text x="680.20" y="505.30" font-size="16.2" fill="#fff" textLength="34.00" lengthAdjust="spacing">全部</text>
<path d="M 721.40,497.00 h 9.2 l -4.60,5.0 z" fill="#fff" stroke="#fff" stroke-width="1.6" stroke-linejoin="round"/>
<text x="752.70" y="505.30" font-size="16.2" fill="#fff" textLength="47.00" lengthAdjust="spacing">RGB灯</text>
<path transform="translate(564.70,527.10) scale(1.0125)" d="M 0,4 A 4,4 0 0,1 4,0 H 12 c 2,0 3,1 4,2 l 4,4 c 1,1 2,2 4,2 h 12 c 2,0 3,-1 4,-2 l 4,-4 c 1,-1 2,-2 4,-2 H 376.7 a 4,4 0 0,1 4,4 V 52 a 4,4 0 0,1 -4,4 H 48 c -2,0 -3,1 -4,2 l -4,4 c -1,1 -2,2 -4,2 h -12 c -2,0 -3,-1 -4,-2 l -4,-4 c -1,-1 -2,-2 -4,-2 H 4 a 4,4 0 0,1 -4,-4 z" fill="#F08080" stroke="#c96b6b" stroke-width="1"/>
<g transform="translate(569.70,528.00)" fill="none" stroke="#fff" stroke-width="1.3" opacity="0.92"><path d="M30,41.3 H18 a2.5,2.5 0 0 1 -2.5,-2.5 V23.8 a2.5,2.5 0 0 1 2.5,-2.5 H36.3 a2.5,2.5 0 0 1 2.5,2.5 V28.5"/><path d="M15.5,26.6 H38.8" stroke-width="1.6"/><path d="M32,24.2 h1 M34.2,24.2 h1.2 M36.4,24.2 h0.8" stroke-width="1"/><path d="M21.3,32 L18.6,35 L21.3,38 M23.2,38.3 L25.6,31.7 M27,32 L29.4,35 L27,38" stroke-width="1.2"/><circle cx="35.2" cy="35.3" r="2.2"/><path d="M34.2,29.6 h2 l0.5,1.5 1.4,0.8 1.5,-0.4 1,1.7 -1.1,1.2 v1.7 l1.1,1.2 -1,1.7 -1.5,-0.4 -1.4,0.8 -0.5,1.5 h-2 l-0.5,-1.5 -1.4,-0.8 -1.5,0.4 -1,-1.7 1.1,-1.2 v-1.7 l-1.1,-1.2 1,-1.7 1.5,0.4 1.4,-0.8 z" fill="#F08080"/><circle cx="35.2" cy="35.3" r="2.2"/></g>
<line x1="631.20" y1="535.10" x2="631.20" y2="575.80" stroke="#cf6e6e" stroke-width="1"/>
<text x="640.60" y="562.00" font-size="16.2" fill="#fff" textLength="63.70" lengthAdjust="spacing">设置引脚</text>
<rect x="711.30" y="539.30" width="61.20" height="32.70" rx="4" fill="#F08080" stroke="#c96b6b" stroke-width="1" />
<text x="722.60" y="562.00" font-size="16.2" fill="#fff" textLength="18.20" lengthAdjust="spacing">S0</text>
<path d="M 749.50,553.70 h 9.2 l -4.60,5.0 z" fill="#fff" stroke="#fff" stroke-width="1.6" stroke-linejoin="round"/>
<text x="781.00" y="562.00" font-size="16.2" fill="#fff" textLength="90.00" lengthAdjust="spacing">180度舵机为</text>
<rect x="878.70" y="539.50" width="39.70" height="32.00" rx="16.00" fill="#fff" stroke="#c96b6b" stroke-width="1"/>
<text x="898.50" y="562.00" font-size="16.2" fill="#575E75" text-anchor="middle">90</text>
<text x="926.90" y="562.00" font-size="16.2" fill="#fff">度</text>
<path transform="translate(564.70,583.80) scale(1.0125)" d="M 0,4 A 4,4 0 0,1 4,0 H 12 c 2,0 3,1 4,2 l 4,4 c 1,1 2,2 4,2 h 12 c 2,0 3,-1 4,-2 l 4,-4 c 1,-1 2,-2 4,-2 H 376.7 a 4,4 0 0,1 4,4 V 52 a 4,4 0 0,1 -4,4 H 48 c -2,0 -3,1 -4,2 l -4,4 c -1,1 -2,2 -4,2 h -12 c -2,0 -3,-1 -4,-2 l -4,-4 c -1,-1 -2,-2 -4,-2 H 4 a 4,4 0 0,1 -4,-4 z" fill="#F08080" stroke="#c96b6b" stroke-width="1"/>
<g transform="translate(569.70,584.70)" fill="none" stroke="#fff" stroke-width="1.3" opacity="0.92"><path d="M30,41.3 H18 a2.5,2.5 0 0 1 -2.5,-2.5 V23.8 a2.5,2.5 0 0 1 2.5,-2.5 H36.3 a2.5,2.5 0 0 1 2.5,2.5 V28.5"/><path d="M15.5,26.6 H38.8" stroke-width="1.6"/><path d="M32,24.2 h1 M34.2,24.2 h1.2 M36.4,24.2 h0.8" stroke-width="1"/><path d="M21.3,32 L18.6,35 L21.3,38 M23.2,38.3 L25.6,31.7 M27,32 L29.4,35 L27,38" stroke-width="1.2"/><circle cx="35.2" cy="35.3" r="2.2"/><path d="M34.2,29.6 h2 l0.5,1.5 1.4,0.8 1.5,-0.4 1,1.7 -1.1,1.2 v1.7 l1.1,1.2 -1,1.7 -1.5,-0.4 -1.4,0.8 -0.5,1.5 h-2 l-0.5,-1.5 -1.4,-0.8 -1.5,0.4 -1,-1.7 1.1,-1.2 v-1.7 l-1.1,-1.2 1,-1.7 1.5,0.4 1.4,-0.8 z" fill="#F08080"/><circle cx="35.2" cy="35.3" r="2.2"/></g>
<line x1="631.20" y1="591.80" x2="631.20" y2="632.50" stroke="#cf6e6e" stroke-width="1"/>
<text x="640.60" y="618.70" font-size="16.2" fill="#fff" textLength="63.70" lengthAdjust="spacing">设置引脚</text>
<rect x="711.30" y="596.00" width="61.20" height="32.70" rx="4" fill="#F08080" stroke="#c96b6b" stroke-width="1" />
<text x="722.60" y="618.70" font-size="16.2" fill="#fff" textLength="18.20" lengthAdjust="spacing">S1</text>
<path d="M 749.50,610.40 h 9.2 l -4.60,5.0 z" fill="#fff" stroke="#fff" stroke-width="1.6" stroke-linejoin="round"/>
<text x="781.00" y="618.70" font-size="16.2" fill="#fff" textLength="90.00" lengthAdjust="spacing">180度舵机为</text>
<rect x="878.70" y="596.20" width="39.70" height="32.00" rx="16.00" fill="#fff" stroke="#c96b6b" stroke-width="1"/>
<text x="898.50" y="618.70" font-size="16.2" fill="#575E75" text-anchor="middle">90</text>
<text x="926.90" y="618.70" font-size="16.2" fill="#fff">度</text>
<path transform="translate(564.70,640.50) scale(1.0125)" d="M 0,4 A 4,4 0 0,1 4,0 H 12 c 2,0 3,1 4,2 l 4,4 c 1,1 2,2 4,2 h 12 c 2,0 3,-1 4,-2 l 4,-4 c 1,-1 2,-2 4,-2 H 376.7 a 4,4 0 0,1 4,4 V 52 a 4,4 0 0,1 -4,4 H 48 c -2,0 -3,1 -4,2 l -4,4 c -1,1 -2,2 -4,2 h -12 c -2,0 -3,-1 -4,-2 l -4,-4 c -1,-1 -2,-2 -4,-2 H 4 a 4,4 0 0,1 -4,-4 z" fill="#F08080" stroke="#c96b6b" stroke-width="1"/>
<g transform="translate(569.70,641.40)" fill="none" stroke="#fff" stroke-width="1.3" opacity="0.92"><path d="M30,41.3 H18 a2.5,2.5 0 0 1 -2.5,-2.5 V23.8 a2.5,2.5 0 0 1 2.5,-2.5 H36.3 a2.5,2.5 0 0 1 2.5,2.5 V28.5"/><path d="M15.5,26.6 H38.8" stroke-width="1.6"/><path d="M32,24.2 h1 M34.2,24.2 h1.2 M36.4,24.2 h0.8" stroke-width="1"/><path d="M21.3,32 L18.6,35 L21.3,38 M23.2,38.3 L25.6,31.7 M27,32 L29.4,35 L27,38" stroke-width="1.2"/><circle cx="35.2" cy="35.3" r="2.2"/><path d="M34.2,29.6 h2 l0.5,1.5 1.4,0.8 1.5,-0.4 1,1.7 -1.1,1.2 v1.7 l1.1,1.2 -1,1.7 -1.5,-0.4 -1.4,0.8 -0.5,1.5 h-2 l-0.5,-1.5 -1.4,-0.8 -1.5,0.4 -1,-1.7 1.1,-1.2 v-1.7 l-1.1,-1.2 1,-1.7 1.5,0.4 1.4,-0.8 z" fill="#F08080"/><circle cx="35.2" cy="35.3" r="2.2"/></g>
<line x1="631.20" y1="648.50" x2="631.20" y2="689.20" stroke="#cf6e6e" stroke-width="1"/>
<text x="640.60" y="675.40" font-size="16.2" fill="#fff" textLength="63.70" lengthAdjust="spacing">设置引脚</text>
<rect x="711.30" y="652.70" width="61.20" height="32.70" rx="4" fill="#F08080" stroke="#c96b6b" stroke-width="1" />
<text x="722.60" y="675.40" font-size="16.2" fill="#fff" textLength="18.20" lengthAdjust="spacing">S2</text>
<path d="M 749.50,667.10 h 9.2 l -4.60,5.0 z" fill="#fff" stroke="#fff" stroke-width="1.6" stroke-linejoin="round"/>
<text x="781.00" y="675.40" font-size="16.2" fill="#fff" textLength="90.00" lengthAdjust="spacing">180度舵机为</text>
<rect x="878.70" y="652.90" width="39.70" height="32.00" rx="16.00" fill="#fff" stroke="#c96b6b" stroke-width="1"/>
<text x="898.50" y="675.40" font-size="16.2" fill="#575E75" text-anchor="middle">90</text>
<text x="926.90" y="675.40" font-size="16.2" fill="#fff">度</text>
<path transform="translate(564.70,697.20) scale(1.0125)" d="M 0,4 A 4,4 0 0,1 4,0 H 12 c 2,0 3,1 4,2 l 4,4 c 1,1 2,2 4,2 h 12 c 2,0 3,-1 4,-2 l 4,-4 c 1,-1 2,-2 4,-2 H 376.7 a 4,4 0 0,1 4,4 V 52 a 4,4 0 0,1 -4,4 H 48 c -2,0 -3,1 -4,2 l -4,4 c -1,1 -2,2 -4,2 h -12 c -2,0 -3,-1 -4,-2 l -4,-4 c -1,-1 -2,-2 -4,-2 H 4 a 4,4 0 0,1 -4,-4 z" fill="#F08080" stroke="#c96b6b" stroke-width="1"/>
<g transform="translate(569.70,698.10)" fill="none" stroke="#fff" stroke-width="1.3" opacity="0.92"><path d="M30,41.3 H18 a2.5,2.5 0 0 1 -2.5,-2.5 V23.8 a2.5,2.5 0 0 1 2.5,-2.5 H36.3 a2.5,2.5 0 0 1 2.5,2.5 V28.5"/><path d="M15.5,26.6 H38.8" stroke-width="1.6"/><path d="M32,24.2 h1 M34.2,24.2 h1.2 M36.4,24.2 h0.8" stroke-width="1"/><path d="M21.3,32 L18.6,35 L21.3,38 M23.2,38.3 L25.6,31.7 M27,32 L29.4,35 L27,38" stroke-width="1.2"/><circle cx="35.2" cy="35.3" r="2.2"/><path d="M34.2,29.6 h2 l0.5,1.5 1.4,0.8 1.5,-0.4 1,1.7 -1.1,1.2 v1.7 l1.1,1.2 -1,1.7 -1.5,-0.4 -1.4,0.8 -0.5,1.5 h-2 l-0.5,-1.5 -1.4,-0.8 -1.5,0.4 -1,-1.7 1.1,-1.2 v-1.7 l-1.1,-1.2 1,-1.7 1.5,0.4 1.4,-0.8 z" fill="#F08080"/><circle cx="35.2" cy="35.3" r="2.2"/></g>
<line x1="631.20" y1="705.20" x2="631.20" y2="745.90" stroke="#cf6e6e" stroke-width="1"/>
<text x="640.60" y="732.10" font-size="16.2" fill="#fff" textLength="63.70" lengthAdjust="spacing">设置引脚</text>
<rect x="711.30" y="709.40" width="61.20" height="32.70" rx="4" fill="#F08080" stroke="#c96b6b" stroke-width="1" />
<text x="722.60" y="732.10" font-size="16.2" fill="#fff" textLength="18.20" lengthAdjust="spacing">S3</text>
<path d="M 749.50,723.80 h 9.2 l -4.60,5.0 z" fill="#fff" stroke="#fff" stroke-width="1.6" stroke-linejoin="round"/>
<text x="781.00" y="732.10" font-size="16.2" fill="#fff" textLength="90.00" lengthAdjust="spacing">180度舵机为</text>
<rect x="878.70" y="709.60" width="39.70" height="32.00" rx="16.00" fill="#fff" stroke="#c96b6b" stroke-width="1"/>
<text x="898.50" y="732.10" font-size="16.2" fill="#575E75" text-anchor="middle">85</text>
<text x="926.90" y="732.10" font-size="16.2" fill="#fff">度</text>
<path transform="translate(564.70,753.90) scale(1.0125)" d="M 0,4 A 4,4 0 0,1 4,0 H 12 c 2,0 3,1 4,2 l 4,4 c 1,1 2,2 4,2 h 12 c 2,0 3,-1 4,-2 l 4,-4 c 1,-1 2,-2 4,-2 H 469.4 a 4,4 0 0,1 4,4 V 52 a 4,4 0 0,1 -4,4 H 48 c -2,0 -3,1 -4,2 l -4,4 c -1,1 -2,2 -4,2 h -12 c -2,0 -3,-1 -4,-2 l -4,-4 c -1,-1 -2,-2 -4,-2 H 4 a 4,4 0 0,1 -4,-4 z" fill="#FF6B33" stroke="#d9562a" stroke-width="1"/>
<g transform="translate(569.70,755.00)" fill="none" stroke="#fff" stroke-width="1.05" stroke-linejoin="round" stroke-linecap="round" opacity="0.95"><path d="M12.3,33 V28.3 L17.3,14 L21.8,20.6 H28.7 L33.1,14 L37.9,28.3 V33"/><path d="M12.8,27.5 L21.8,20.6 M28.7,20.6 L37.5,27.5 M17.3,14.5 L14.2,27 M33.1,14.5 L36.2,27"/><path d="M16,32.8 Q16,30 19.5,29.5 L22.5,26.6 L25,31 L27.7,26.8 L29.6,29.3 Q34,30 34.6,32.8"/><path d="M11.6,33.7 H30 M33.2,33.7 H38.6 M11.6,37.3 H30 M33.2,37.3 H38.6 M11.6,33.7 L11.2,36 M38.6,33.7 L39,36"/><path d="M31.6,34.2 L32.1,35.1 L33,35.5 L32.1,35.9 L31.6,36.8 L31.1,35.9 L30.2,35.5 L31.1,35.1 z" fill="#fff" stroke-width="0.5"/><path d="M12.4,37.6 L20.3,46.5 H29.9 L37.9,37.6"/><path d="M23.6,39.8 H27.2 L24,43.5 H27 L23.6,39.8" stroke-width="0.9"/></g>
<text x="609.70" y="801.80" font-size="12.5" fill="#fff" font-weight="700">2</text>
<line x1="631.20" y1="761.90" x2="631.20" y2="802.60" stroke="#d9562a" stroke-width="1"/>
<text x="640.70" y="788.80" font-size="16.2" fill="#fff" textLength="233.00" lengthAdjust="spacing">HUSKYLENS 2初始化无线通信 IP</text>
<rect x="881.60" y="766.70" width="160.00" height="31.20" rx="15.60" fill="#fff" stroke="#d9562a" stroke-width="1"/>
<text x="895.50" y="784.40" font-size="12" fill="#575E75" font-weight="700">"</text>
<text x="908.70" y="788.80" font-size="16.2" fill="#575E75">192.168.0.10</text>
<path transform="translate(564.70,810.60) scale(1.0125)" d="M 0,4 A 4,4 0 0,1 4,0 H 12 c 2,0 3,1 4,2 l 4,4 c 1,1 2,2 4,2 h 12 c 2,0 3,-1 4,-2 l 4,-4 c 1,-1 2,-2 4,-2 H 431.9 a 4,4 0 0,1 4,4 V 52 a 4,4 0 0,1 -4,4 H 48 c -2,0 -3,1 -4,2 l -4,4 c -1,1 -2,2 -4,2 h -12 c -2,0 -3,-1 -4,-2 l -4,-4 c -1,-1 -2,-2 -4,-2 H 4 a 4,4 0 0,1 -4,-4 z" fill="#FF6B33" stroke="#d9562a" stroke-width="1"/>
<g transform="translate(569.70,811.70)" fill="none" stroke="#fff" stroke-width="1.05" stroke-linejoin="round" stroke-linecap="round" opacity="0.95"><path d="M12.3,33 V28.3 L17.3,14 L21.8,20.6 H28.7 L33.1,14 L37.9,28.3 V33"/><path d="M12.8,27.5 L21.8,20.6 M28.7,20.6 L37.5,27.5 M17.3,14.5 L14.2,27 M33.1,14.5 L36.2,27"/><path d="M16,32.8 Q16,30 19.5,29.5 L22.5,26.6 L25,31 L27.7,26.8 L29.6,29.3 Q34,30 34.6,32.8"/><path d="M11.6,33.7 H30 M33.2,33.7 H38.6 M11.6,37.3 H30 M33.2,37.3 H38.6 M11.6,33.7 L11.2,36 M38.6,33.7 L39,36"/><path d="M31.6,34.2 L32.1,35.1 L33,35.5 L32.1,35.9 L31.6,36.8 L31.1,35.9 L30.2,35.5 L31.1,35.1 z" fill="#fff" stroke-width="0.5"/><path d="M12.4,37.6 L20.3,46.5 H29.9 L37.9,37.6"/><path d="M23.6,39.8 H27.2 L24,43.5 H27 L23.6,39.8" stroke-width="0.9"/></g>
<text x="609.70" y="858.50" font-size="12.5" fill="#fff" font-weight="700">2</text>
<line x1="631.20" y1="818.60" x2="631.20" y2="859.30" stroke="#d9562a" stroke-width="1"/>
<text x="640.70" y="845.50" font-size="16.2" fill="#fff" textLength="214.00" lengthAdjust="spacing">HUSKYLENS 2切换到内置模型</text>
<rect x="862.30" y="822.10" width="136.10" height="32.50" rx="4" fill="#FF6B33" stroke="#d9562a" stroke-width="1" />
<text x="872.40" y="845.50" font-size="16.2" fill="#fff" textLength="95.70" lengthAdjust="spacing">光学字符识别</text>
<path d="M 976.00,837.20 h 9.2 l -4.60,5.0 z" fill="#fff" stroke="#fff" stroke-width="1.6" stroke-linejoin="round"/>
<path transform="translate(564.70,867.30) scale(1.0125)" d="M 0,4 A 4,4 0 0,1 4,0 H 12 c 2,0 3,1 4,2 l 4,4 c 1,1 2,2 4,2 h 12 c 2,0 3,-1 4,-2 l 4,-4 c 1,-1 2,-2 4,-2 H 156 a 4,4 0 0,1 4,4 V 44 a 4,4 0 0,1 -4,4 H 64 c -2,0 -3,1 -4,2 l -4,4 c -1,1 -2,2 -4,2 h -12 c -2,0 -3,-1 -4,-2 l -4,-4 c -1,-1 -2,-2 -4,-2 H 20 a 4,4 0 0,0 -4,4 V 244 a 4,4 0 0,0 4,4 H 28 c 2,0 3,1 4,2 l 4,4 c 1,1 2,2 4,2 h 12 c 2,0 3,-1 4,-2 l 4,-4 c 1,-1 2,-2 4,-2 H 156 a 4,4 0 0,1 4,4 V 276 a 4,4 0 0,1 -4,4 H 48 c -2,0 -3,1 -4,2 l -4,4 c -1,1 -2,2 -4,2 h -12 c -2,0 -3,-1 -4,-2 l -4,-4 c -1,-1 -2,-2 -4,-2 H 4 a 4,4 0 0,1 -4,-4 z" fill="#FFAB19" stroke="#CF8B17" stroke-width="1"/>
<text x="572.00" y="898.00" font-size="16.2" fill="#fff" textLength="64.80" lengthAdjust="spacing">循环执行</text>
<path transform="translate(580.90,915.90) scale(1.0125)" d="M 0,4 A 4,4 0 0,1 4,0 H 12 c 2,0 3,1 4,2 l 4,4 c 1,1 2,2 4,2 h 12 c 2,0 3,-1 4,-2 l 4,-4 c 1,-1 2,-2 4,-2 H 299.7 a 4,4 0 0,1 4,4 V 52 a 4,4 0 0,1 -4,4 H 48 c -2,0 -3,1 -4,2 l -4,4 c -1,1 -2,2 -4,2 h -12 c -2,0 -3,-1 -4,-2 l -4,-4 c -1,-1 -2,-2 -4,-2 H 4 a 4,4 0 0,1 -4,-4 z" fill="#FF6B33" stroke="#d9562a" stroke-width="1"/>
<g transform="translate(585.90,917.00)" fill="none" stroke="#fff" stroke-width="1.05" stroke-linejoin="round" stroke-linecap="round" opacity="0.95"><path d="M12.3,33 V28.3 L17.3,14 L21.8,20.6 H28.7 L33.1,14 L37.9,28.3 V33"/><path d="M12.8,27.5 L21.8,20.6 M28.7,20.6 L37.5,27.5 M17.3,14.5 L14.2,27 M33.1,14.5 L36.2,27"/><path d="M16,32.8 Q16,30 19.5,29.5 L22.5,26.6 L25,31 L27.7,26.8 L29.6,29.3 Q34,30 34.6,32.8"/><path d="M11.6,33.7 H30 M33.2,33.7 H38.6 M11.6,37.3 H30 M33.2,37.3 H38.6 M11.6,33.7 L11.2,36 M38.6,33.7 L39,36"/><path d="M31.6,34.2 L32.1,35.1 L33,35.5 L32.1,35.9 L31.6,36.8 L31.1,35.9 L30.2,35.5 L31.1,35.1 z" fill="#fff" stroke-width="0.5"/><path d="M12.4,37.6 L20.3,46.5 H29.9 L37.9,37.6"/><path d="M23.6,39.8 H27.2 L24,43.5 H27 L23.6,39.8" stroke-width="0.9"/></g>
<text x="625.90" y="963.80" font-size="12.5" fill="#fff" font-weight="700">2</text>
<line x1="647.800" y1="923.90" x2="647.800" y2="964.60" stroke="#d9562a" stroke-width="1"/>
<text x="656.30" y="950.80" font-size="16.2" fill="#fff" textLength="225.60" lengthAdjust="spacing">请求一次文字识别数据 存入结果</text>
<path transform="translate(580.90,972.60) scale(1.0125)" d="M 0,4 A 4,4 0 0,1 4,0 H 12 c 2,0 3,1 4,2 l 4,4 c 1,1 2,2 4,2 h 12 c 2,0 3,-1 4,-2 l 4,-4 c 1,-1 2,-2 4,-2 H 356 a 4,4 0 0,1 4,4 V 44 a 4,4 0 0,1 -4,4 H 64 c -2,0 -3,1 -4,2 l -4,4 c -1,1 -2,2 -4,2 h -12 c -2,0 -3,-1 -4,-2 l -4,-4 c -1,-1 -2,-2 -4,-2 H 20 a 4,4 0 0,0 -4,4 V 100 a 4,4 0 0,0 4,4 H 28 c 2,0 3,1 4,2 l 4,4 c 1,1 2,2 4,2 h 12 c 2,0 3,-1 4,-2 l 4,-4 c 1,-1 2,-2 4,-2 H 356 a 4,4 0 0,1 4,4 V 132 a 4,4 0 0,1 -4,4 H 48 c -2,0 -3,1 -4,2 l -4,4 c -1,1 -2,2 -4,2 h -12 c -2,0 -3,-1 -4,-2 l -4,-4 c -1,-1 -2,-2 -4,-2 H 4 a 4,4 0 0,1 -4,-4 z" fill="#FFAB19" stroke="#CF8B17" stroke-width="1"/>
<path d="M 653.80,975.60 H 842.80 L 862.80,995.60 L 842.80,1015.60 H 653.80 L 633.80,995.60 z" fill="#FF6B33" stroke="#d9562a" stroke-width="1"/>
</g>
<circle cx="1017" cy="566" r="27.100" fill="#FCE5C5"/>
<g transform="translate(1017,566)" fill="none" stroke="#F8A32B" stroke-width="3.200" stroke-linecap="round" stroke-linejoin="round"><path d="M-7.500,-2.500 A9.300,9.300 0 1 1 2.500,9"/><path d="M-11.500,-3.500 L-7.600,2.800 L-1.600,-3.800 z" fill="#F8A32B" stroke-width="1.500"/></g>
<circle cx="1017" cy="637.6" r="27.100" fill="#FCE5C5"/>
<g transform="translate(1017,637.6)" fill="none" stroke="#F8A32B" stroke-width="3.200" stroke-linecap="round" stroke-linejoin="round"><path d="M7.800,-1.500 A9.300,9.300 0 1 0 -2.500,9"/><path d="M11.800,-2.500 L7.800,3.800 L1.800,-2.800 z" fill="#F8A32B" stroke-width="1.500"/></g>
<circle cx="1017" cy="709.8" r="27.100" fill="#FCE5C5"/>
<g transform="translate(1017,709.8)" fill="none" stroke="#F8A32B" stroke-width="3.300" stroke-linecap="round" stroke-linejoin="round"><path d="M-11,-7.500 H7.500 V11.500 M-7,-11.500 V7.500 H12 M-6,6.500 L6.500,-6.500" /></g>
<circle cx="1018.5" cy="783.3" r="25.200" fill="none" stroke="#000" stroke-opacity="0.13" stroke-width="3.200"/>
<circle cx="1018.5" cy="783.3" r="23.700" fill="#fff"/>
<g fill="none" stroke="#6B7088" stroke-width="2" stroke-linecap="round"><circle cx="1018.5" cy="783.5999999999999" r="10.400"/><path d="M1026.2,791.3 L1030.8,795.9"/><path d="M1014.9,783.5999999999999 h7.200"/><path d="M1018.5,780.0 v7.200"/></g>
<circle cx="1018.5" cy="849.3" r="25.200" fill="none" stroke="#000" stroke-opacity="0.13" stroke-width="3.200"/>
<circle cx="1018.5" cy="849.3" r="23.700" fill="#fff"/>
<g fill="none" stroke="#6B7088" stroke-width="2" stroke-linecap="round"><circle cx="1018.5" cy="849.5999999999999" r="10.400"/><path d="M1026.2,857.3 L1030.8,861.9"/><path d="M1014.9,849.5999999999999 h7.200"/></g>
<circle cx="1018.5" cy="915" r="25.200" fill="none" stroke="#000" stroke-opacity="0.13" stroke-width="3.200"/>
<circle cx="1018.5" cy="915" r="23.700" fill="#fff"/>
<path d="M1012.0,910.3 h13 M1012.0,919.3 h13" stroke="#6B7088" stroke-width="2.800" stroke-linecap="round"/>
<path d="M3,984 H1070 a8,8 0 0 1 8,8 V1006 H3 z" fill="#fff" stroke="#dcdad7" stroke-width="1"/>
<path d="M5,977.500 H1079" stroke="#dedcd9" stroke-width="1"/>
<text x="541.70" y="1000.00" font-size="13" fill="#575E75" text-anchor="middle" textLength="28.07" lengthAdjust="spacing">书包</text>
<rect x="1089.60" y="152.00" width="804.00" height="432.00" rx="8" fill="#d9d6d2" />
<rect x="1088.60" y="150.60" width="806.00" height="432.20" rx="8" fill="#fff" stroke="#cfccc8" stroke-width="1" />
<path d="M1089.200,191.800 V158.600 a7.500,7.500 0 0 1 7.500,-7.500 H1886.500 a7.500,7.500 0 0 1 7.500,7.500 V191.800 z" fill="#F8F6F3"/>
<path d="M1089,191.800 H1894.200" stroke="#e6e3df" stroke-width="1"/>
<path d="M1374.800,152 V191.500" stroke="#eceae7" stroke-width="1"/>
<path d="M1089.300,192.500 V159 a7.500,7.500 0 0 1 7.500,-7.500 H1231.800 V192.500 z" fill="#fff"/>
<path d="M1089.300,192 V159 a7.500,7.500 0 0 1 7.500,-7.500 H1231.800 V192" fill="none" stroke="#F8AC30" stroke-width="1.200"/>
<text x="1122.53" y="180.20" font-size="19" fill="#F8A93A" textLength="77.08" lengthAdjust="spacing">自动生成</text>
<text x="1264.83" y="179.60" font-size="19" fill="#575757" textLength="77.58" lengthAdjust="spacing">手动编辑</text>
<rect x="1105.30" y="207.80" width="773.00" height="359.40" rx="8" fill="#fff" stroke="#ececec" stroke-width="1" />
<g clip-path="url(#cpEd)">
<rect x="1106" y="208" width="772" height="360" fill="#EEEEEE"/>
<rect x="1106" y="208" width="72" height="360" fill="#DBDBDB"/>
<rect x="1178" y="347.50" width="700" height="23.0" fill="#E4E4E4"/>
<rect x="1106" y="347.50" width="72" height="23.0" fill="#F0F0F0"/>
<rect x="1184" y="348.00" width="2.200" height="22.0" fill="#b5b5c5"/>
<text x="1158.50" y="226.00" font-size="17.8" fill="#444" text-anchor="end" textLength="9.49" lengthAdjust="spacing" font-family='"Liberation Mono","Noto Sans CJK SC",monospace' stroke="#333" stroke-width="0.25">1</text>
<text x="1184.30" y="226.00" font-size="17.8" fill="#555555" textLength="30.77" lengthAdjust="spacing" font-family='"Liberation Mono","Noto Sans CJK SC",monospace' font-style="italic" xml:space="preserve" stroke="#555555" stroke-width="0.25">/*!</text>
<text x="1158.50" y="249.00" font-size="17.8" fill="#444" text-anchor="end" textLength="9.49" lengthAdjust="spacing" font-family='"Liberation Mono","Noto Sans CJK SC",monospace' stroke="#333" stroke-width="0.25">2</text>
<text x="1194.99" y="249.00" font-size="17.8" fill="#555555" textLength="105.60" lengthAdjust="spacing" font-family='"Liberation Mono","Noto Sans CJK SC",monospace' font-style="italic" xml:space="preserve" stroke="#555555" stroke-width="0.25">* MindPlus</text>
<text x="1158.50" y="272.00" font-size="17.8" fill="#444" text-anchor="end" textLength="9.49" lengthAdjust="spacing" font-family='"Liberation Mono","Noto Sans CJK SC",monospace' stroke="#333" stroke-width="0.25">3</text>
<text x="1194.99" y="272.00" font-size="17.8" fill="#555555" textLength="126.98" lengthAdjust="spacing" font-family='"Liberation Mono","Noto Sans CJK SC",monospace' font-style="italic" xml:space="preserve" stroke="#555555" stroke-width="0.25">* esp32s3bit</text>
<text x="1158.50" y="295.00" font-size="17.8" fill="#444" text-anchor="end" textLength="9.49" lengthAdjust="spacing" font-family='"Liberation Mono","Noto Sans CJK SC",monospace' stroke="#333" stroke-width="0.25">4</text>
<text x="1194.99" y="295.00" font-size="17.8" fill="#555555" textLength="9.39" lengthAdjust="spacing" font-family='"Liberation Mono","Noto Sans CJK SC",monospace' font-style="italic" xml:space="preserve" stroke="#555555" stroke-width="0.25">*</text>
<text x="1158.50" y="318.00" font-size="17.8" fill="#444" text-anchor="end" textLength="9.49" lengthAdjust="spacing" font-family='"Liberation Mono","Noto Sans CJK SC",monospace' stroke="#333" stroke-width="0.25">5</text>
<text x="1194.99" y="318.00" font-size="17.8" fill="#555555" textLength="20.08" lengthAdjust="spacing" font-family='"Liberation Mono","Noto Sans CJK SC",monospace' font-style="italic" xml:space="preserve" stroke="#555555" stroke-width="0.25">*/</text>
<text x="1158.50" y="341.00" font-size="17.8" fill="#444" text-anchor="end" textLength="9.49" lengthAdjust="spacing" font-family='"Liberation Mono","Noto Sans CJK SC",monospace' stroke="#333" stroke-width="0.25">6</text>
<text x="1184.30" y="341.00" font-size="17.8" fill="#0a0af5" textLength="84.22" lengthAdjust="spacing" font-family='"Liberation Mono","Noto Sans CJK SC",monospace' xml:space="preserve" stroke="#0a0af5" stroke-width="0.45">#include</text>
<text x="1280.51" y="341.00" font-size="17.8" fill="#1a55ff" textLength="159.05" lengthAdjust="spacing" font-family='"Liberation Mono","Noto Sans CJK SC",monospace' xml:space="preserve" stroke="#1a55ff" stroke-width="0.45">&lt;DFRobot_Iot.h&gt;</text>
<text x="1158.50" y="364.00" font-size="17.8" fill="#444" text-anchor="end" textLength="9.49" lengthAdjust="spacing" font-family='"Liberation Mono","Noto Sans CJK SC",monospace' stroke="#333" stroke-width="0.25">7</text>
<text x="1184.30" y="364.00" font-size="17.8" fill="#0a0af5" textLength="84.22" lengthAdjust="spacing" font-family='"Liberation Mono","Noto Sans CJK SC",monospace' xml:space="preserve" stroke="#0a0af5" stroke-width="0.45">#include</text>
<text x="1280.51" y="364.00" font-size="17.8" fill="#1a55ff" textLength="169.74" lengthAdjust="spacing" font-family='"Liberation Mono","Noto Sans CJK SC",monospace' xml:space="preserve" stroke="#1a55ff" stroke-width="0.45">"unihiker_k10.h"</text>
<text x="1158.50" y="387.00" font-size="17.8" fill="#444" text-anchor="end" textLength="9.49" lengthAdjust="spacing" font-family='"Liberation Mono","Noto Sans CJK SC",monospace' stroke="#333" stroke-width="0.25">8</text>
<text x="1184.30" y="387.00" font-size="17.8" fill="#0a0af5" textLength="84.22" lengthAdjust="spacing" font-family='"Liberation Mono","Noto Sans CJK SC",monospace' xml:space="preserve" stroke="#0a0af5" stroke-width="0.45">#include</text>
<text x="1280.51" y="387.00" font-size="17.8" fill="#1a55ff" textLength="244.57" lengthAdjust="spacing" font-family='"Liberation Mono","Noto Sans CJK SC",monospace' xml:space="preserve" stroke="#1a55ff" stroke-width="0.45">"arduino_image_cache.h"</text>
<text x="1158.50" y="410.00" font-size="17.8" fill="#444" text-anchor="end" textLength="9.49" lengthAdjust="spacing" font-family='"Liberation Mono","Noto Sans CJK SC",monospace' stroke="#333" stroke-width="0.25">9</text>
<text x="1184.30" y="410.00" font-size="17.8" fill="#0a0af5" textLength="84.22" lengthAdjust="spacing" font-family='"Liberation Mono","Noto Sans CJK SC",monospace' xml:space="preserve" stroke="#0a0af5" stroke-width="0.45">#include</text>
<text x="1280.51" y="410.00" font-size="17.8" fill="#1a55ff" textLength="298.02" lengthAdjust="spacing" font-family='"Liberation Mono","Noto Sans CJK SC",monospace' xml:space="preserve" stroke="#1a55ff" stroke-width="0.45">"DFRobot_HuskylensV2_MQTT.h"</text>
<text x="1158.50" y="433.00" font-size="17.8" fill="#444" text-anchor="end" textLength="20.18" lengthAdjust="spacing" font-family='"Liberation Mono","Noto Sans CJK SC",monospace' stroke="#333" stroke-width="0.25">10</text>
<text x="1184.30" y="433.00" font-size="17.8" fill="#0a0af5" textLength="84.22" lengthAdjust="spacing" font-family='"Liberation Mono","Noto Sans CJK SC",monospace' xml:space="preserve" stroke="#0a0af5" stroke-width="0.45">#include</text>
<text x="1280.51" y="433.00" font-size="17.8" fill="#1a55ff" textLength="308.71" lengthAdjust="spacing" font-family='"Liberation Mono","Noto Sans CJK SC",monospace' xml:space="preserve" stroke="#1a55ff" stroke-width="0.45">"DFRobot_UnihikerExpansion.h"</text>
<text x="1158.50" y="456.00" font-size="17.8" fill="#444" text-anchor="end" textLength="20.18" lengthAdjust="spacing" font-family='"Liberation Mono","Noto Sans CJK SC",monospace' stroke="#333" stroke-width="0.25">11</text>
<text x="1184.30" y="456.00" font-size="17.8" fill="#555555" textLength="30.77" lengthAdjust="spacing" font-family='"Liberation Mono","Noto Sans CJK SC",monospace' font-style="italic" xml:space="preserve" stroke="#555555" stroke-width="0.25">// </text>
<text x="1218.37" y="455.50" font-size="18.5" fill="#9a9a9a" textLength="82.20" lengthAdjust="spacing" font-family='"Liberation Serif","Noto Serif CJK SC",serif' font-style="italic" transform="skewX(-12)" transform-origin="1216.4 456.0">函数声明</text>
<text x="1158.50" y="479.00" font-size="17.8" fill="#444" text-anchor="end" textLength="20.18" lengthAdjust="spacing" font-family='"Liberation Mono","Noto Sans CJK SC",monospace' stroke="#333" stroke-width="0.25">12</text>
<text x="1184.30" y="479.00" font-size="17.8" fill="#2b2bf0" textLength="41.46" lengthAdjust="spacing" font-family='"Liberation Mono","Noto Sans CJK SC",monospace' xml:space="preserve" stroke="#2b2bf0" stroke-width="0.45">void</text>
<text x="1237.75" y="479.00" font-size="17.8" fill="#111" textLength="201.81" lengthAdjust="spacing" font-family='"Liberation Mono","Noto Sans CJK SC",monospace' xml:space="preserve" stroke="#111" stroke-width="0.25">onButtonBPressed();</text>
<text x="1158.50" y="502.00" font-size="17.8" fill="#444" text-anchor="end" textLength="20.18" lengthAdjust="spacing" font-family='"Liberation Mono","Noto Sans CJK SC",monospace' stroke="#333" stroke-width="0.25">13</text>
<text x="1184.30" y="502.00" font-size="17.8" fill="#2b2bf0" textLength="41.46" lengthAdjust="spacing" font-family='"Liberation Mono","Noto Sans CJK SC",monospace' xml:space="preserve" stroke="#2b2bf0" stroke-width="0.45">void</text>
<text x="1237.75" y="502.00" font-size="17.8" fill="#111" textLength="201.81" lengthAdjust="spacing" font-family='"Liberation Mono","Noto Sans CJK SC",monospace' xml:space="preserve" stroke="#111" stroke-width="0.25">onButtonAPressed();</text>
<text x="1158.50" y="525.00" font-size="17.8" fill="#444" text-anchor="end" textLength="20.18" lengthAdjust="spacing" font-family='"Liberation Mono","Noto Sans CJK SC",monospace' stroke="#333" stroke-width="0.25">14</text>
<text x="1184.30" y="525.00" font-size="17.8" fill="#2b2bf0" textLength="41.46" lengthAdjust="spacing" font-family='"Liberation Mono","Noto Sans CJK SC",monospace' xml:space="preserve" stroke="#2b2bf0" stroke-width="0.45">void</text>
<text x="1237.75" y="525.00" font-size="17.8" fill="#111" textLength="126.98" lengthAdjust="spacing" font-family='"Liberation Mono","Noto Sans CJK SC",monospace' xml:space="preserve" stroke="#111" stroke-width="0.25">DF_ZuoXia();</text>
<text x="1158.50" y="548.00" font-size="17.8" fill="#444" text-anchor="end" textLength="20.18" lengthAdjust="spacing" font-family='"Liberation Mono","Noto Sans CJK SC",monospace' stroke="#333" stroke-width="0.25">15</text>
<text x="1184.30" y="548.00" font-size="17.8" fill="#2b2bf0" textLength="41.46" lengthAdjust="spacing" font-family='"Liberation Mono","Noto Sans CJK SC",monospace' xml:space="preserve" stroke="#2b2bf0" stroke-width="0.45">void</text>
<text x="1237.75" y="548.00" font-size="17.8" fill="#111" textLength="159.05" lengthAdjust="spacing" font-family='"Liberation Mono","Noto Sans CJK SC",monospace' xml:space="preserve" stroke="#111" stroke-width="0.25">DF_ZhanQiLai();</text>
<text x="1158.50" y="571.00" font-size="17.8" fill="#444" text-anchor="end" textLength="20.18" lengthAdjust="spacing" font-family='"Liberation Mono","Noto Sans CJK SC",monospace' stroke="#333" stroke-width="0.25">16</text>
<path d="M1163.800,219.200 h8.400 l-4.200,4.300 z" fill="#555"/>
<rect x="1862" y="208" width="9.300" height="348.500" rx="4.500" fill="#E2E2E2"/>
<rect x="1862" y="209.500" width="9.300" height="41.300" rx="4.600" fill="#EEC466"/>
<rect x="1178" y="557" width="684" height="9" rx="4.500" fill="#E4E4E4"/>
<rect x="1178" y="557" width="665.500" height="9" rx="4.500" fill="#EEC36A"/>
</g>
<path d="M1088.500,1006 V592.500 a7.500,7.500 0 0 1 7.500,-7.500 H1887.100 a7.500,7.500 0 0 1 7.500,7.500 V1006 z" fill="#fff" stroke="#e3e1de" stroke-width="1"/>
<path d="M1091.200,947.500 V593 a5.500,5.500 0 0 1 5.500,-5.500 H1887 a5.500,5.500 0 0 1 5.500,5.500 V947.500 z" fill="#000"/>
<path d="M1091.200,608.800 V593 a5.500,5.500 0 0 1 5.500,-5.500 H1887 a5.500,5.500 0 0 1 5.500,5.500 V608.800 z" fill="#2B2B2B"/>
<rect x="1097.200" y="588" width="2.700" height="20.800" fill="#444"/>
<rect x="1888.800" y="608.800" width="3.700" height="338.700" fill="#1a1a1a"/>
<circle cx="1860.600" cy="618.500" r="22.600" fill="#F8AC30"/>
<text x="1860.80" y="632.60" font-size="38" fill="#fff" text-anchor="middle" stroke="#fff" stroke-width="1.5" stroke-linejoin="round">?</text>
<rect x="1098.20" y="957.70" width="85.40" height="41.80" rx="4" fill="#fff" stroke="#e9e9e9" stroke-width="1" />
<path d="M1140.800,958 V999.300" stroke="#e9e9e9" stroke-width="1"/>
<g transform="translate(1118.8,978.4)" fill="none" stroke="#bdbdbd" stroke-width="2.200" stroke-linecap="round" stroke-linejoin="round"><path d="M0,-7 V8.500 M-7,-1.500 V2 Q-7,4.500 -4,5 L0,6 M7,-2 V1 Q7,3 4,3.500 L0,4.500"/><path d="M0,-11.500 L-3,-6.800 H3 z" fill="#bdbdbd" stroke-width="1"/><circle cx="0" cy="10" r="2.300" fill="#bdbdbd" stroke="none"/><circle cx="-7" cy="-2.500" r="1.900" fill="#bdbdbd" stroke="none"/><rect x="5.200" y="-4.800" width="3.600" height="3.600" fill="#bdbdbd" stroke="none"/></g>
<g transform="translate(1162,978)" fill="none" stroke="#F8A32B" stroke-width="2.200" stroke-linecap="round" stroke-linejoin="round"><path d="M0,-7 V8.500 M-7,-1.500 V2 Q-7,4.500 -4,5 L0,6 M7,-2 V1 Q7,3 4,3.500 L0,4.500"/><path d="M0,-11.500 L-3,-6.800 H3 z" fill="#F8A32B" stroke-width="1"/><circle cx="0" cy="10" r="2.300" fill="#F8A32B" stroke="none"/><circle cx="-7" cy="-2.500" r="1.900" fill="#F8A32B" stroke="none"/><rect x="5.200" y="-4.800" width="3.600" height="3.600" fill="#F8A32B" stroke="none"/></g>
<path d="M1150.300,988.500 L1174.500,968.800" stroke="#F8A32B" stroke-width="1.800" stroke-linecap="round"/>
<rect x="1303.30" y="966.30" width="24.50" height="24.20" rx="5" fill="#fff" stroke="#111" stroke-width="1.3" />
<g transform="translate(1315.500,978.400) rotate(45)" fill="#000"><path d="M-5.500,-9 h11 v6 h-11 z"/><path d="M-5.500,-1.800 h11 v2.300 q0,1.500 -2.500,1.500 h-1 v5.200 a2,2 0 0 1 -4,0 v-5.200 h-1 q-2.500,0 -2.500,-1.500 z"/><path d="M-1,-9 v3.500 M2,-9 v2.500" stroke="#fff" stroke-width="1.300"/></g>
<rect x="1448" y="961.800" width="198.300" height="34" fill="#E6EDF2"/>
<rect x="1451" y="964.800" width="192.300" height="28" fill="#CCCCCC"/>
<rect x="1656.30" y="962.00" width="70.80" height="33.80" rx="3" fill="#000" />
<text x="1691.90" y="986.20" font-size="19.6" fill="#fff" text-anchor="middle" textLength="37.86" lengthAdjust="spacing">发送</text>
<path d="M1841.300,950 H1893.300 V997 a8,8 0 0 1 -8,8 H1841.300 z" fill="#F8AC30"/>
<g stroke="#fff" stroke-width="3.300" stroke-linecap="round"><path d="M1859.500,968 H1882.500 M1859.500,978.500 H1882.500 M1859.500,989 H1882.500"/><path d="M1851.600,968 h0.100 M1851.600,978.500 h0.100 M1851.600,989 h0.100" stroke-width="4.200"/></g>
<path d="M1902.400,946 Q1921,970 1902.400,994 z" fill="#cfe3de" opacity="0.8"/>
<rect x="1573.600" y="27.500" width="105.800" height="81" fill="none" stroke="#ED1C24" stroke-width="6.200"/>
</svg>
</body></html>
